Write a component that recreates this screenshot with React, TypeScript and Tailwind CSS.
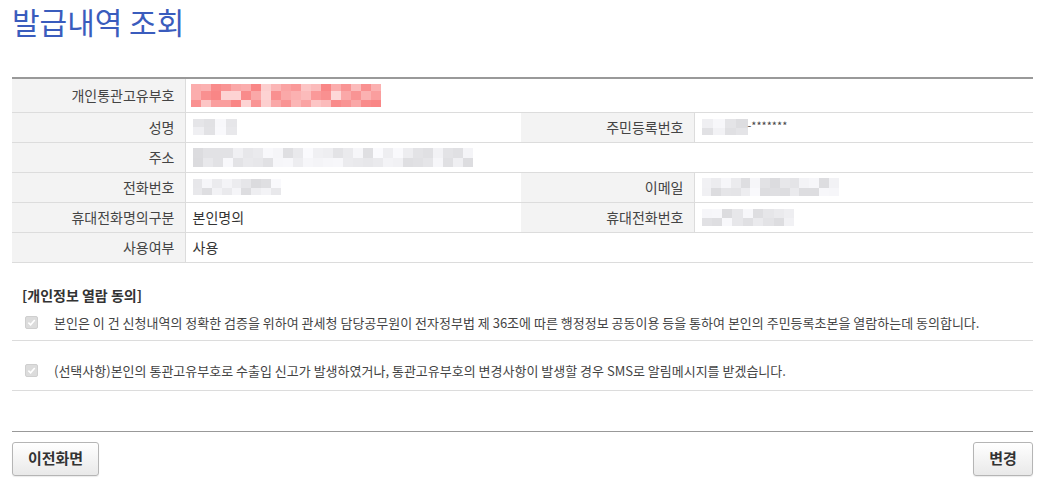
import React from "react";

function rng(seed: number) {
  let s = seed;
  return () => {
    s = (s * 9301 + 49297) % 233280;
    return s / 233280;
  };
}

function Mosaic({
  cols,
  rows,
  cw,
  seed,
  pink,
}: {
  cols: number;
  rows: number[];
  cw: number;
  seed: number;
  pink?: boolean;
}) {
  const r = rng(seed);
  return (
    <div className="flex flex-col">
      {rows.map((h, ri) => (
        <div key={ri} className="flex">
          {Array.from({ length: cols }).map((_, ci) => {
            const v = r();
            let color: string;
            if (pink) {
              const l = 74 + Math.round(v * 18);
              color = `hsl(0, 90%, ${l}%)`;
            } else {
              const g = 218 + Math.round(v * 32);
              color = `rgb(${g},${g},${g + 3})`;
            }
            return <div key={ci} style={{ width: cw, height: h, background: color }} />;
          })}
        </div>
      ))}
    </div>
  );
}

function Check() {
  return (
    <div className="w-[13px] h-[13px] rounded-[2px] bg-[#dcdcdc] border border-[#cfcfcf] flex items-center justify-center shrink-0">
      <svg width="9" height="9" viewBox="0 0 10 10">
        <path d="M1.5 5.2 L4 7.6 L8.6 2.2" stroke="#fff" strokeWidth="1.8" fill="none" />
      </svg>
    </div>
  );
}

const labelCls =
  "bg-[#f3f3f3] text-right pr-[10px] text-[14px] text-[#444] border border-[#dcdcdc] border-l-0";
const valueCls = "pl-[7px] text-[14px] text-[#333] border border-[#dcdcdc] border-r-0";

export default function App() {
  return (
    <div
      className="w-[1043px] h-[486px] bg-white overflow-hidden"
      style={{ fontFamily: '"Noto Sans CJK KR", "Noto Sans", sans-serif' }}
    >
      <div className="ml-[12px] w-[1021px]">
        <h1 className="text-[30px] leading-[40px] pt-[1px] text-[#3a5cbd] font-normal">발급내역 조회</h1>
        <table className="mt-[36px] w-full table-fixed border-collapse border-t-2 border-t-[#999]">
          <colgroup>
            <col className="w-[173px]" />
            <col className="w-[336px]" />
            <col className="w-[173px]" />
            <col className="w-[339px]" />
          </colgroup>
          <tbody>
            <tr className="h-[34px]">
              <td className={labelCls + " border-t-0"}>개인통관고유부호</td>
              <td colSpan={3} className={valueCls + " border-t-0"}>
                <div className="-ml-[2px]">
                  <Mosaic cols={19} rows={[7, 9, 7]} cw={10} seed={7} pink />
                </div>
              </td>
            </tr>
            <tr className="h-[30px]">
              <td className={labelCls}>성명</td>
              <td className={valueCls}>
                <Mosaic cols={4} rows={[8, 8]} cw={11} seed={3} />
              </td>
              <td className={labelCls + " border-l"}>주민등록번호</td>
              <td className={valueCls + " pl-[5px]"}>
                <div className="flex items-center">
                  <Mosaic cols={4} rows={[9, 7]} cw={11.5} seed={11} />
                  <span className="text-[11px] text-[#444] leading-none -mt-[3px]">-*******</span>
                </div>
              </td>
            </tr>
            <tr className="h-[30px]">
              <td className={labelCls}>주소</td>
              <td colSpan={3} className={valueCls}>
                <Mosaic cols={28} rows={[10, 9]} cw={10} seed={21} />
              </td>
            </tr>
            <tr className="h-[30px]">
              <td className={labelCls}>전화번호</td>
              <td className={valueCls}>
                <Mosaic cols={9} rows={[9, 7]} cw={9.8} seed={5} />
              </td>
              <td className={labelCls + " border-l"}>이메일</td>
              <td className={valueCls + " pl-[6px]"}>
                <Mosaic cols={14} rows={[10, 8]} cw={9.8} seed={13} />
              </td>
            </tr>
            <tr className="h-[30px]">
              <td className={labelCls}>휴대전화명의구분</td>
              <td className={valueCls}>본인명의</td>
              <td className={labelCls + " border-l"}>휴대전화번호</td>
              <td className={valueCls + " pl-[6px]"}>
                <Mosaic cols={9} rows={[9, 8]} cw={10.3} seed={17} />
              </td>
            </tr>
            <tr className="h-[30px]">
              <td className={labelCls}>사용여부</td>
              <td colSpan={3} className={valueCls}>사용</td>
            </tr>
          </tbody>
        </table>

        <div className="mt-[22px] pl-[10px] text-[14px] font-bold text-[#333] leading-[20px]">[개인정보 열람 동의]</div>
        <div className="flex items-center gap-[16px] pl-[13px] pt-[8px] pb-[7px] border-b border-[#dcdcdc] text-[13px] text-[#444] leading-[20px]">
          <Check />
          <span>
            본인은 이 건 신청내역의 정확한 검증을 위하여 관세청 담당공무원이 전자정부법 제 36조에 따른 행정정보 공동이용 등을 통하여
            본인의 주민등록초본을 열람하는데 동의합니다.
          </span>
        </div>
        <div className="flex items-center gap-[16px] pl-[13px] pt-[20px] pb-[9px] border-b border-[#dcdcdc] text-[13px] text-[#444] leading-[20px]">
          <Check />
          <span>(선택사항)본인의 통관고유부호로 수출입 신고가 발생하였거나, 통관고유부호의 변경사항이 발생할 경우 SMS로 알림메시지를 받겠습니다.</span>
        </div>

        <div className="mt-[40px] border-t border-[#999]" />
        <div className="mt-[10px] flex justify-between">
          <button className="w-[87px] h-[34px] rounded-[3px] border border-[#b5b5b5] bg-gradient-to-b from-white to-[#e9e9e9] shadow-[0_1px_1px_rgba(0,0,0,0.08)] text-[15px] font-bold text-[#333]">
            이전화면
          </button>
          <button className="w-[60px] h-[34px] rounded-[3px] border border-[#b5b5b5] bg-gradient-to-b from-white to-[#e9e9e9] shadow-[0_1px_1px_rgba(0,0,0,0.08)] text-[15px] font-bold text-[#333]">
            변경
          </button>
        </div>
      </div>
    </div>
  );
}
